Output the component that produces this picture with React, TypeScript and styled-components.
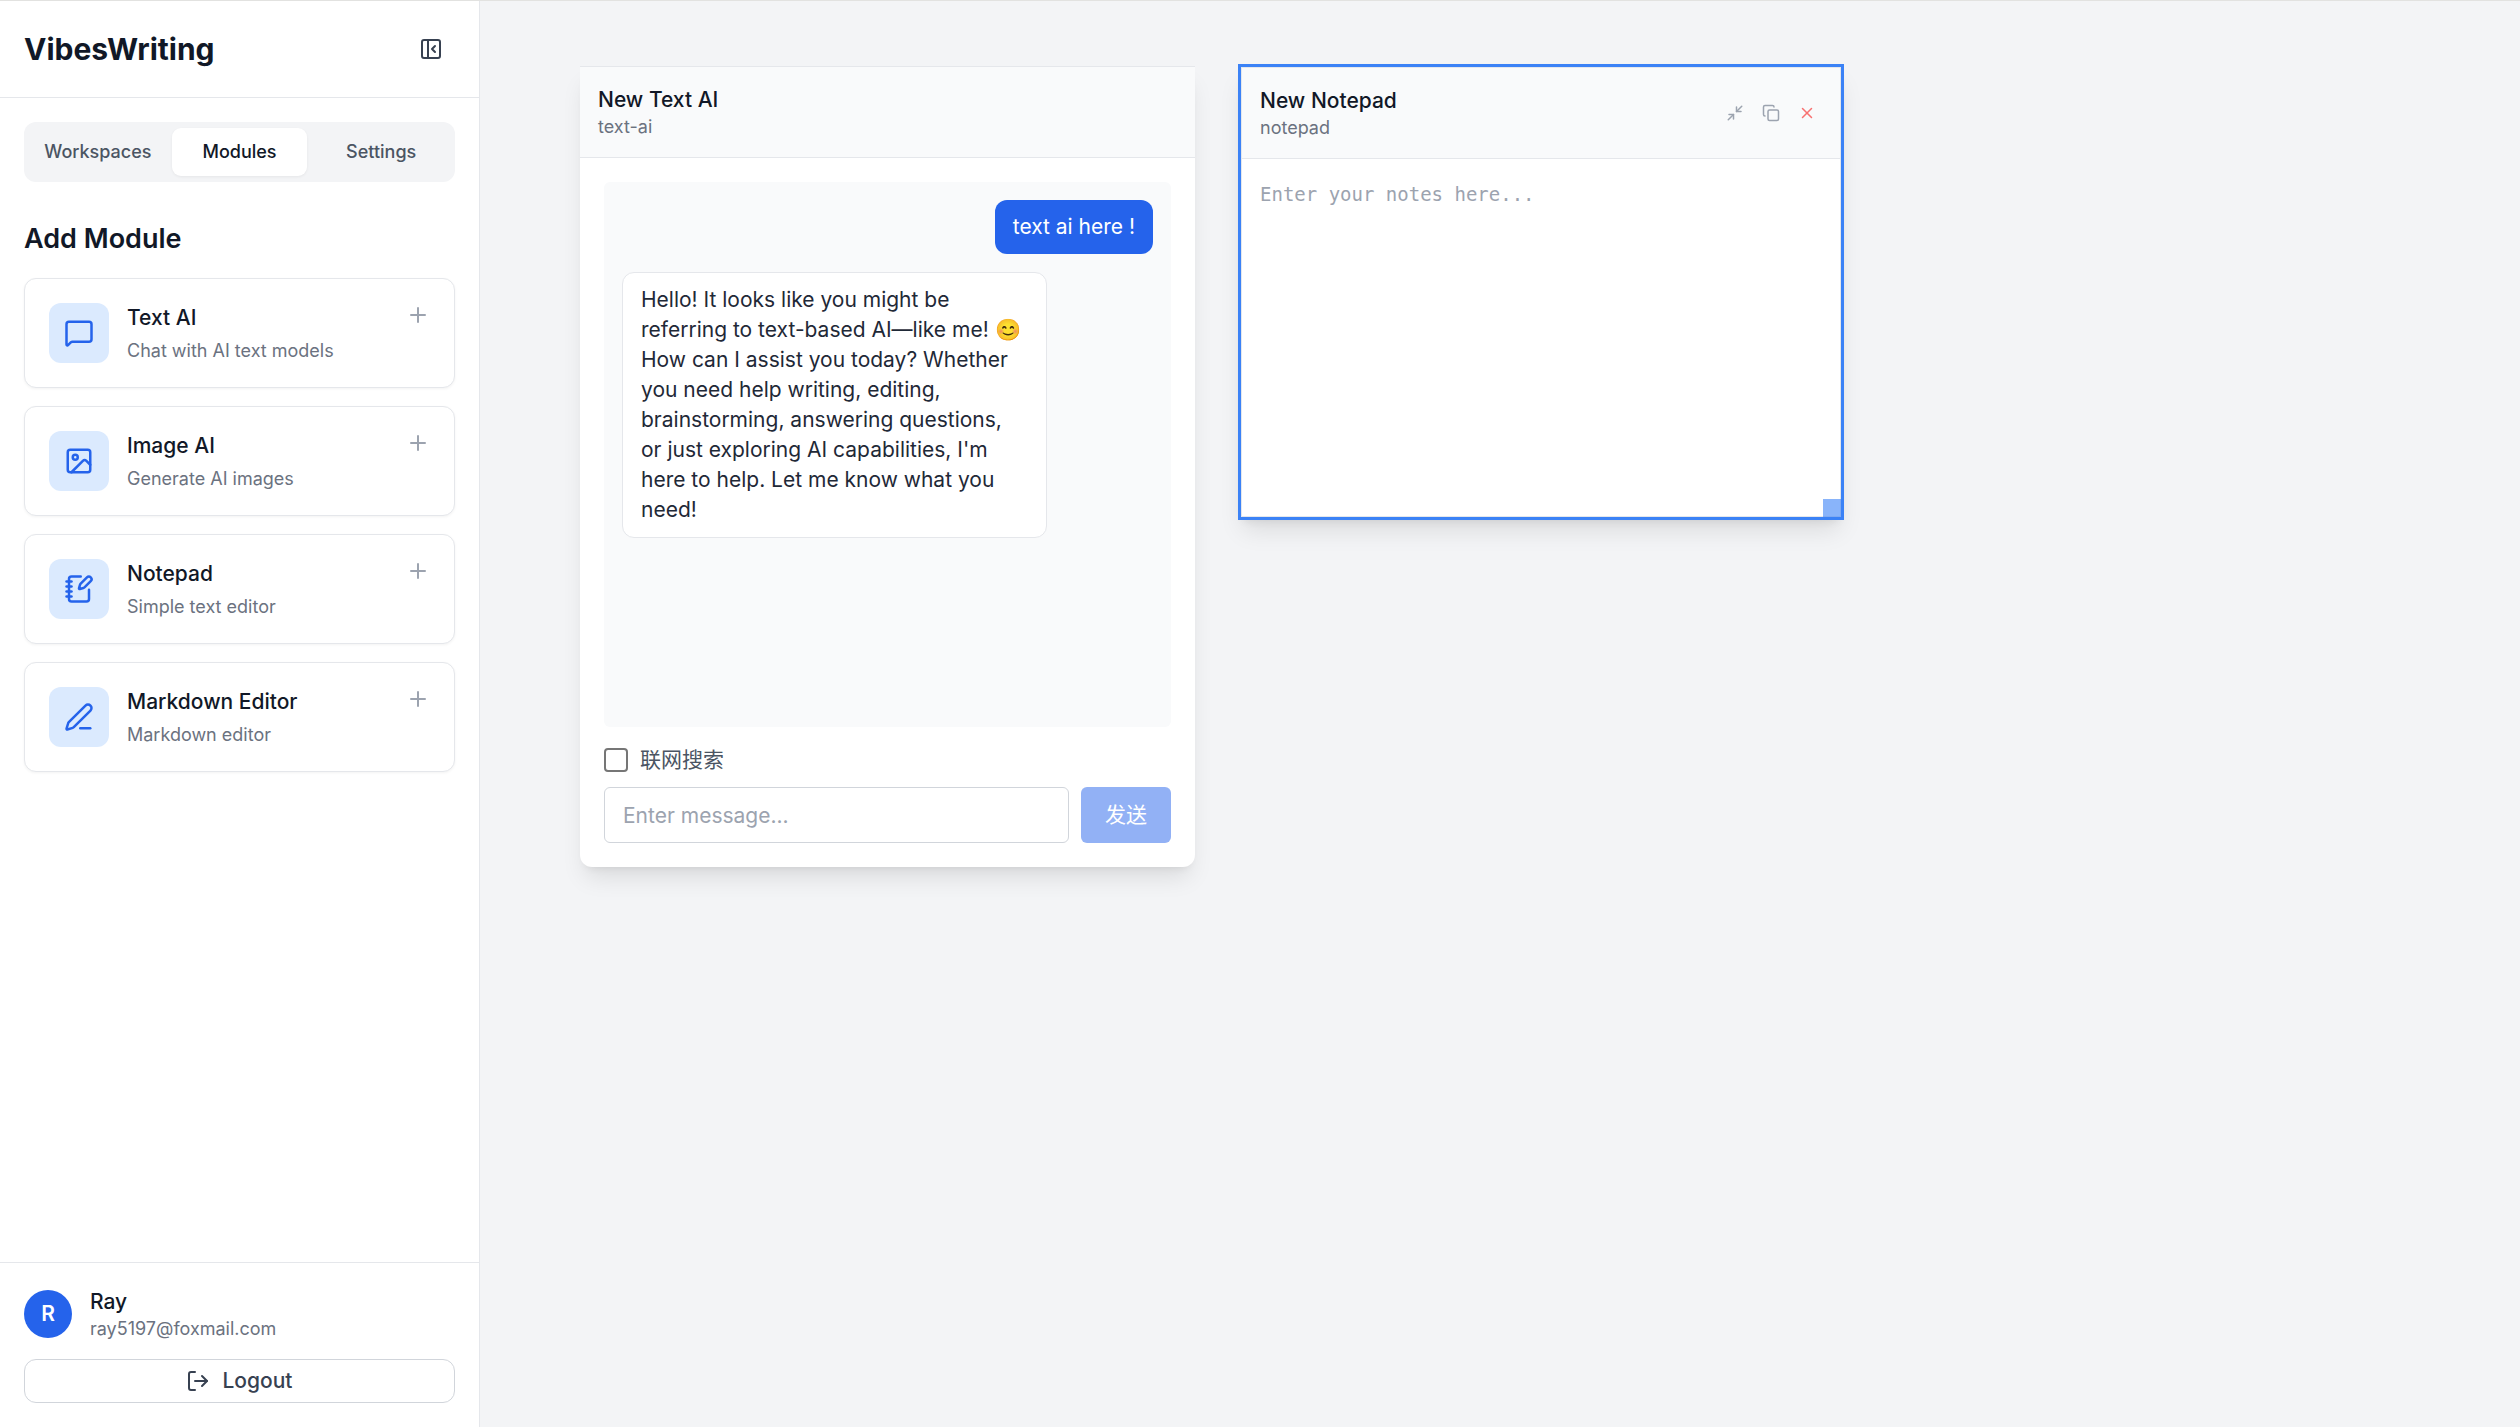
import React, { useState } from "react";
import styled, { createGlobalStyle } from "styled-components";
import {
  Copy,
  Image as ImageIcon,
  LogOut,
  MessageSquare,
  Minimize2,
  NotebookPen,
  PanelLeftClose,
  PenLine,
  Plus,
  X,
  type LucideIcon,
} from "lucide-react";

const GlobalStyle = createGlobalStyle`
  *, *::before, *::after { box-sizing: border-box; }
  body {
    margin: 0;
    font-family: Inter, "Noto Sans CJK SC", sans-serif;
    font-size: 21px;
    line-height: 30px;
    color: #111827;
    background: #f3f4f6;
  }
  button, input, textarea { font: inherit; color: inherit; }
  button { cursor: pointer; border: 0; background: none; padding: 0; }
  h1, h2, h3, p, ul { margin: 0; padding: 0; }
`;

const Shell = styled.div`
  display: flex;
  height: 100vh;
  border-top: 1px solid #e2e2e0;
`;

const Sidebar = styled.aside`
  flex: none;
  width: 480px;
  display: flex;
  flex-direction: column;
  background: #fff;
  border-right: 1px solid #e5e7eb;
`;

const SidebarHeader = styled.header`
  display: flex;
  align-items: center;
  justify-content: space-between;
  padding: 24px;
  border-bottom: 1px solid #e5e7eb;
`;

const Brand = styled.h1`
  font-size: 30px;
  line-height: 42px;
  font-weight: 700;
`;

const CollapseButton = styled.button`
  display: flex;
  padding: 12px;
  border-radius: 12px;
  color: #374151;
`;

const SidebarBody = styled.div`
  flex: 1;
  min-height: 0;
  overflow: auto;
  padding: 24px;
`;

const Tabs = styled.nav`
  display: flex;
  gap: 6px;
  padding: 6px;
  border-radius: 12px;
  background: #f3f4f6;
`;

const Tab = styled.button<{ $active: boolean }>`
  flex: 1 1 0;
  height: 48px;
  border-radius: 9px;
  font-size: 18px;
  line-height: 24px;
  font-weight: 500;
  color: ${(p) => (p.$active ? "#111827" : "#4b5563")};
  background: ${(p) => (p.$active ? "#fff" : "transparent")};
  box-shadow: ${(p) => (p.$active ? "0 1px 3px rgba(0, 0, 0, 0.06)" : "none")};
`;

const SectionTitle = styled.h2`
  margin: 36px 0 18px;
  font-size: 27px;
  line-height: 42px;
  font-weight: 600;
`;

const ModuleList = styled.ul`
  display: flex;
  flex-direction: column;
  gap: 18px;
  list-style: none;
`;

const ModuleCard = styled.button`
  display: flex;
  align-items: flex-start;
  gap: 18px;
  width: 100%;
  padding: 24px;
  text-align: left;
  background: #fff;
  border: 1px solid #e5e7eb;
  border-radius: 12px;
  box-shadow: 0 1px 3px rgba(0, 0, 0, 0.05);
`;

const ModuleIcon = styled.span`
  display: grid;
  place-items: center;
  width: 60px;
  height: 60px;
  border-radius: 12px;
  background: #dbeafe;
  color: #2563eb;
`;

const ModuleText = styled.span`
  flex: 1;
  display: flex;
  flex-direction: column;
  gap: 6px;
`;

const ModuleName = styled.span`
  font-weight: 500;
`;

const Muted = styled.span`
  font-size: 18px;
  line-height: 24px;
  color: #6b7280;
`;

const AddIcon = styled(Plus)`
  color: #9ca3af;
`;

const SidebarFooter = styled.footer`
  display: flex;
  flex-direction: column;
  gap: 18px;
  padding: 24px;
  border-top: 1px solid #e5e7eb;
`;

const Account = styled.div`
  display: flex;
  align-items: center;
  gap: 18px;
`;

const Avatar = styled.span`
  display: grid;
  place-items: center;
  width: 48px;
  height: 48px;
  border-radius: 50%;
  background: #2563eb;
  color: #fff;
  font-weight: 600;
`;

const Stack = styled.div`
  display: flex;
  flex-direction: column;
`;

const LogoutButton = styled.button`
  display: flex;
  align-items: center;
  justify-content: center;
  gap: 12px;
  height: 44px;
  border: 1px solid #d1d5db;
  border-radius: 12px;
  font-weight: 500;
  color: #374151;
`;

const Canvas = styled.main`
  position: relative;
  flex: 1;
  overflow: hidden;
`;

const Window = styled.section<{ $x: number; $y: number; $w: number; $h: number; $selected?: boolean }>`
  position: absolute;
  left: ${(p) => p.$x}px;
  top: ${(p) => p.$y}px;
  width: ${(p) => p.$w}px;
  height: ${(p) => p.$h}px;
  display: flex;
  flex-direction: column;
  background: #fff;
  border: ${(p) => (p.$selected ? "3px solid #3b82f6" : "0 solid transparent")};
  border-top: ${(p) => (p.$selected ? "3px solid #3b82f6" : "1px solid #e5e7eb")};
  border-radius: ${(p) => (p.$selected ? "0" : "0 0 12px 12px")};
  box-shadow: 0 15px 23px -5px rgba(0, 0, 0, 0.1), 0 6px 9px -6px rgba(0, 0, 0, 0.1);
`;

const WindowHeader = styled.header`
  display: flex;
  align-items: center;
  justify-content: space-between;
  padding: 18px;
  height: 91px;
  background: #f9fafb;
  border-bottom: 1px solid #e5e7eb;
`;

const WindowTitle = styled.h3`
  font-size: 21px;
  line-height: 30px;
  font-weight: 500;
`;

const WindowActions = styled.div`
  display: flex;
  gap: 6px;
`;

const IconButton = styled.button<{ $danger?: boolean }>`
  display: flex;
  padding: 6px;
  color: ${(p) => (p.$danger ? "#f87171" : "#9ca3af")};
`;

const ChatBody = styled.div`
  flex: 1;
  min-height: 0;
  display: flex;
  flex-direction: column;
  padding: 24px;
`;

const Messages = styled.div`
  flex: 1;
  min-height: 0;
  display: flex;
  flex-direction: column;
  gap: 18px;
  padding: 18px;
  border-radius: 6px;
  background: #f9fafb;
`;

const Bubble = styled.p<{ $own?: boolean }>`
  align-self: ${(p) => (p.$own ? "flex-end" : "flex-start")};
  max-width: 80%;
  padding: 12px 18px;
  border: ${(p) => (p.$own ? "0" : "1px solid #e5e7eb")};
  border-radius: 12px;
  background: ${(p) => (p.$own ? "#2563eb" : "#fff")};
  color: ${(p) => (p.$own ? "#fff" : "#1f2937")};
`;

const SearchToggle = styled.label`
  display: flex;
  align-items: center;
  gap: 12px;
  margin: 18px 0 12px;
  color: #4b5563;
`;

const Checkbox = styled.input`
  appearance: none;
  width: 24px;
  height: 24px;
  margin: 0;
  border: 2px solid #767676;
  border-radius: 4px;
  background: #fff;

  &:checked {
    border-color: #2563eb;
    background: #2563eb;
  }
`;

const Composer = styled.form`
  display: flex;
  gap: 12px;
`;

const MessageInput = styled.input`
  flex: 1;
  min-width: 0;
  height: 56px;
  padding: 0 18px;
  border: 1px solid #d1d5db;
  border-radius: 6px;
  background: #fff;

  &::placeholder {
    color: #9ca3af;
    opacity: 1;
  }
`;

const SendButton = styled.button`
  width: 90px;
  border-radius: 6px;
  background: #92b1f5;
  color: #fff;
`;

const Notes = styled.textarea`
  flex: 1;
  margin: 0;
  padding: 18px;
  border: 0;
  resize: none;
  outline: 0;
  font-family: "DejaVu Sans Mono", monospace;
  font-size: 19px;
  line-height: 34px;

  &::placeholder {
    color: #9ca3af;
    opacity: 1;
  }
`;

const NoteFrame = styled.div`
  flex: 1;
  display: flex;
  flex-direction: column;
  border: 1px solid #e5e7eb;
`;

const ResizeHandle = styled.span`
  position: absolute;
  right: 0;
  bottom: 0;
  width: 18px;
  height: 18px;
  background: #3b82f6;
  opacity: 0.6;
  cursor: nwse-resize;
`;

const modules: { name: string; detail: string; icon: LucideIcon }[] = [
  { name: "Text AI", detail: "Chat with AI text models", icon: MessageSquare },
  { name: "Image AI", detail: "Generate AI images", icon: ImageIcon },
  { name: "Notepad", detail: "Simple text editor", icon: NotebookPen },
  { name: "Markdown Editor", detail: "Markdown editor", icon: PenLine },
];

const tabs = ["Workspaces", "Modules", "Settings"];

export default function App() {
  const [tab, setTab] = useState("Modules");

  return (
    <>
      <GlobalStyle />
      <Shell>
        <Sidebar>
          <SidebarHeader>
            <Brand>VibesWriting</Brand>
            <CollapseButton aria-label="Collapse sidebar">
              <PanelLeftClose size={24} />
            </CollapseButton>
          </SidebarHeader>

          <SidebarBody>
            <Tabs>
              {tabs.map((name) => (
                <Tab key={name} $active={name === tab} onClick={() => setTab(name)}>
                  {name}
                </Tab>
              ))}
            </Tabs>
            <SectionTitle>Add Module</SectionTitle>
            <ModuleList>
              {modules.map(({ name, detail, icon: Icon }) => (
                <li key={name}>
                  <ModuleCard>
                    <ModuleIcon>
                      <Icon size={30} />
                    </ModuleIcon>
                    <ModuleText>
                      <ModuleName>{name}</ModuleName>
                      <Muted>{detail}</Muted>
                    </ModuleText>
                    <AddIcon size={24} />
                  </ModuleCard>
                </li>
              ))}
            </ModuleList>
          </SidebarBody>

          <SidebarFooter>
            <Account>
              <Avatar>R</Avatar>
              <Stack>
                <ModuleName>Ray</ModuleName>
                <Muted>ray5197@foxmail.com</Muted>
              </Stack>
            </Account>
            <LogoutButton>
              <LogOut size={24} />
              Logout
            </LogoutButton>
          </SidebarFooter>
        </Sidebar>

        <Canvas>
          <Window $x={100} $y={65} $w={615} $h={801}>
            <WindowHeader>
              <Stack>
                <WindowTitle>New Text AI</WindowTitle>
                <Muted>text-ai</Muted>
              </Stack>
            </WindowHeader>
            <ChatBody>
              <Messages>
                <Bubble $own>text ai here !</Bubble>
                <Bubble>
                  Hello! It looks like you might be referring to text-based AI—like me! 😊 How can I
                  assist you today? Whether you need help writing, editing, brainstorming, answering
                  questions, or just exploring AI capabilities, I'm here to help. Let me know what
                  you need!
                </Bubble>
              </Messages>
              <SearchToggle>
                <Checkbox type="checkbox" />
                联网搜索
              </SearchToggle>
              <Composer onSubmit={(e) => e.preventDefault()}>
                <MessageInput aria-label="Message" placeholder="Enter message..." />
                <SendButton type="submit">发送</SendButton>
              </Composer>
            </ChatBody>
          </Window>

          <Window $x={758} $y={63} $w={606} $h={456} $selected>
            <NoteFrame>
              <WindowHeader>
                <Stack>
                  <WindowTitle>New Notepad</WindowTitle>
                  <Muted>notepad</Muted>
                </Stack>
                <WindowActions>
                  <IconButton aria-label="Minimize">
                    <Minimize2 size={18} />
                  </IconButton>
                  <IconButton aria-label="Duplicate">
                    <Copy size={18} />
                  </IconButton>
                  <IconButton aria-label="Close" $danger>
                    <X size={18} />
                  </IconButton>
                </WindowActions>
              </WindowHeader>
              <Notes aria-label="Notes" placeholder="Enter your notes here..." />
            </NoteFrame>
            <ResizeHandle />
          </Window>
        </Canvas>
      </Shell>
    </>
  );
}
